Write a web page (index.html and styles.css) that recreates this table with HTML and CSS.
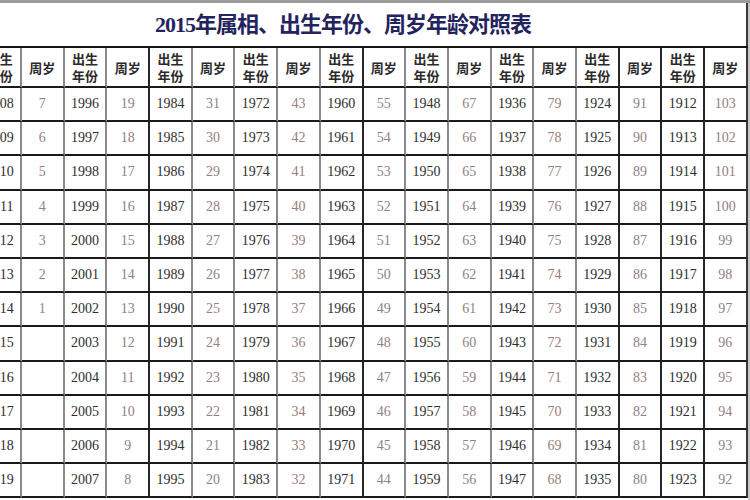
FILE: index.html
```html
<!DOCTYPE html>
<html lang="zh">
<head>
<meta charset="utf-8">
<title>2015年属相、出生年份、周岁年龄对照表</title>
<link rel="stylesheet" href="styles.css">
</head>
<body>
<div class="page">
  <div class="content">
    <h1 class="title">2015年属相、出生年份、周岁年龄对照表</h1>
    <div class="grid">
      <div class="h">出生<br>年份</div><div class="h">周岁</div><div class="h">出生<br>年份</div><div class="h">周岁</div><div class="h">出生<br>年份</div><div class="h">周岁</div><div class="h">出生<br>年份</div><div class="h">周岁</div><div class="h">出生<br>年份</div><div class="h">周岁</div><div class="h">出生<br>年份</div><div class="h">周岁</div><div class="h">出生<br>年份</div><div class="h">周岁</div><div class="h">出生<br>年份</div><div class="h">周岁</div><div class="h">出生<br>年份</div><div class="h">周岁</div>

      <div class="y">2008</div><div class="a">7</div><div class="y">1996</div><div class="a">19</div><div class="y">1984</div><div class="a">31</div><div class="y">1972</div><div class="a">43</div><div class="y">1960</div><div class="a">55</div><div class="y">1948</div><div class="a">67</div><div class="y">1936</div><div class="a">79</div><div class="y">1924</div><div class="a">91</div><div class="y">1912</div><div class="a">103</div>
      <div class="y">2009</div><div class="a">6</div><div class="y">1997</div><div class="a">18</div><div class="y">1985</div><div class="a">30</div><div class="y">1973</div><div class="a">42</div><div class="y">1961</div><div class="a">54</div><div class="y">1949</div><div class="a">66</div><div class="y">1937</div><div class="a">78</div><div class="y">1925</div><div class="a">90</div><div class="y">1913</div><div class="a">102</div>
      <div class="y">2010</div><div class="a">5</div><div class="y">1998</div><div class="a">17</div><div class="y">1986</div><div class="a">29</div><div class="y">1974</div><div class="a">41</div><div class="y">1962</div><div class="a">53</div><div class="y">1950</div><div class="a">65</div><div class="y">1938</div><div class="a">77</div><div class="y">1926</div><div class="a">89</div><div class="y">1914</div><div class="a">101</div>
      <div class="y">2011</div><div class="a">4</div><div class="y">1999</div><div class="a">16</div><div class="y">1987</div><div class="a">28</div><div class="y">1975</div><div class="a">40</div><div class="y">1963</div><div class="a">52</div><div class="y">1951</div><div class="a">64</div><div class="y">1939</div><div class="a">76</div><div class="y">1927</div><div class="a">88</div><div class="y">1915</div><div class="a">100</div>
      <div class="y">2012</div><div class="a">3</div><div class="y">2000</div><div class="a">15</div><div class="y">1988</div><div class="a">27</div><div class="y">1976</div><div class="a">39</div><div class="y">1964</div><div class="a">51</div><div class="y">1952</div><div class="a">63</div><div class="y">1940</div><div class="a">75</div><div class="y">1928</div><div class="a">87</div><div class="y">1916</div><div class="a">99</div>
      <div class="y">2013</div><div class="a">2</div><div class="y">2001</div><div class="a">14</div><div class="y">1989</div><div class="a">26</div><div class="y">1977</div><div class="a">38</div><div class="y">1965</div><div class="a">50</div><div class="y">1953</div><div class="a">62</div><div class="y">1941</div><div class="a">74</div><div class="y">1929</div><div class="a">86</div><div class="y">1917</div><div class="a">98</div>
      <div class="y">2014</div><div class="a">1</div><div class="y">2002</div><div class="a">13</div><div class="y">1990</div><div class="a">25</div><div class="y">1978</div><div class="a">37</div><div class="y">1966</div><div class="a">49</div><div class="y">1954</div><div class="a">61</div><div class="y">1942</div><div class="a">73</div><div class="y">1930</div><div class="a">85</div><div class="y">1918</div><div class="a">97</div>
      <div class="y">2015</div><div class="a"></div><div class="y">2003</div><div class="a">12</div><div class="y">1991</div><div class="a">24</div><div class="y">1979</div><div class="a">36</div><div class="y">1967</div><div class="a">48</div><div class="y">1955</div><div class="a">60</div><div class="y">1943</div><div class="a">72</div><div class="y">1931</div><div class="a">84</div><div class="y">1919</div><div class="a">96</div>
      <div class="y">2016</div><div class="a"></div><div class="y">2004</div><div class="a">11</div><div class="y">1992</div><div class="a">23</div><div class="y">1980</div><div class="a">35</div><div class="y">1968</div><div class="a">47</div><div class="y">1956</div><div class="a">59</div><div class="y">1944</div><div class="a">71</div><div class="y">1932</div><div class="a">83</div><div class="y">1920</div><div class="a">95</div>
      <div class="y">2017</div><div class="a"></div><div class="y">2005</div><div class="a">10</div><div class="y">1993</div><div class="a">22</div><div class="y">1981</div><div class="a">34</div><div class="y">1969</div><div class="a">46</div><div class="y">1957</div><div class="a">58</div><div class="y">1945</div><div class="a">70</div><div class="y">1933</div><div class="a">82</div><div class="y">1921</div><div class="a">94</div>
      <div class="y">2018</div><div class="a"></div><div class="y">2006</div><div class="a">9</div><div class="y">1994</div><div class="a">21</div><div class="y">1982</div><div class="a">33</div><div class="y">1970</div><div class="a">45</div><div class="y">1958</div><div class="a">57</div><div class="y">1946</div><div class="a">69</div><div class="y">1934</div><div class="a">81</div><div class="y">1922</div><div class="a">93</div>
      <div class="y">2019</div><div class="a"></div><div class="y">2007</div><div class="a">8</div><div class="y">1995</div><div class="a">20</div><div class="y">1983</div><div class="a">32</div><div class="y">1971</div><div class="a">44</div><div class="y">1959</div><div class="a">56</div><div class="y">1947</div><div class="a">68</div><div class="y">1935</div><div class="a">80</div><div class="y">1923</div><div class="a">92</div>
    </div>
  </div>
  <div class="edge"></div>
</div>
</body>
</html>
```

FILE: styles.css
```css
html, body {
  margin: 0;
  padding: 0;
  background: #ffffff;
}

.page {
  width: 750px;
  height: 500px;
  overflow: hidden;
  display: flex;
  border-top: 3px solid #9c9c9c;
  box-sizing: border-box;
  background: #ffffff;
}

.content {
  width: 748px;
  flex: none;
  overflow: hidden;
}

.edge {
  flex: 1;
  background: #c8c8c8;
}

.title {
  margin: 0;
  height: 43px;
  box-sizing: border-box;
  padding-left: 155px;
  border-right: 2px solid #3a3a3a;
  font-family: "Liberation Serif", "Noto Sans CJK SC", serif;
  font-weight: bold;
  font-size: 22px;
  line-height: 43px;
  color: #23235e;
  white-space: nowrap;
  letter-spacing: -1px;
}

.grid {
  display: grid;
  grid-template-columns: repeat(18, 42.7px);
  grid-template-rows: 40px repeat(12, 34.2px);
  margin-left: -20.7px;
  width: 768.6px;
  border-top: 2px solid #161616;
}

.grid > div {
  box-sizing: border-box;
  border-right: 2px solid #8a8a8a;
  border-bottom: 2px solid #1a1a1a;
  display: flex;
  align-items: center;
  justify-content: center;
  text-align: center;
  white-space: nowrap;
}

.grid > div:nth-child(18n+4),
.grid > div:nth-child(18n+9),
.grid > div:nth-child(18n+15),
.grid > div:nth-child(18n+16),
.grid > div:nth-child(18n+17) {
  border-right-color: #262626;
}

.grid > div:nth-child(18n) {
  border-right-color: #3a3a3a;
}

.h {
  font-family: "Liberation Serif", "Noto Sans CJK SC", serif;
  font-weight: bold;
  font-size: 13px;
  line-height: 17px;
  color: #2a2a2a;
  padding-top: 2px;
}

.y {
  font-family: "Liberation Serif", serif;
  font-size: 14px;
  color: #2e2e2e;
}

.a {
  font-family: "Liberation Serif", serif;
  font-size: 14px;
  color: #948080;
}
```
